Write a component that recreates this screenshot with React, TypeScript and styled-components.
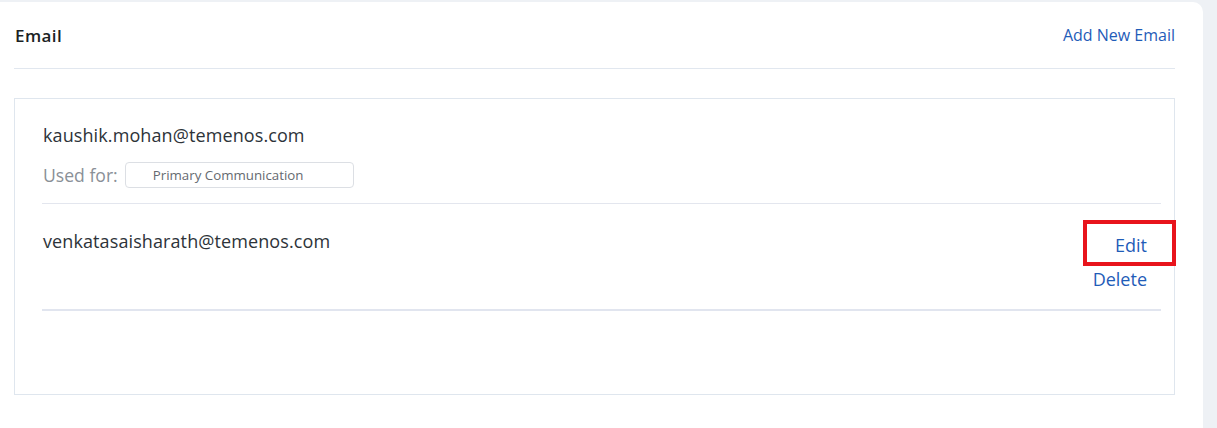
import React from "react";
import styled, { createGlobalStyle } from "styled-components";

const Global = createGlobalStyle`
  html, body { margin: 0; padding: 0; background: #eef1f5; }
  body { font-family: "Open Sans", Lato, sans-serif; }
  * { box-sizing: border-box; }
`;

const Card = styled.div`
  margin-top: 2px;
  width: 1203px;
  min-height: 426px;
  background: #ffffff;
  border-top-right-radius: 10px;
  padding: 0 28px 0 14px;
`;

const Header = styled.div`
  height: 67px;
  display: flex;
  align-items: center;
  justify-content: space-between;
  padding: 0 0 0 1px;
  border-bottom: 1px solid #e1e7ef;
`;

const Title = styled.h2`
  margin: 0;
  font-size: 17px;
  font-weight: 600;
  color: #1b1f24;
  letter-spacing: 0.4px;
`;

const Link = styled.a`
  color: #1f5cb8;
  font-size: 16px;
  cursor: pointer;
  text-decoration: none;
`;

const Box = styled.div`
  margin-top: 29px;
  border: 1px solid #dfe6ee;
  height: 297px;
  padding: 0 13px 0 27px;
`;

const Row = styled.div<{ $last?: boolean }>`
  display: flex;
  justify-content: space-between;
  align-items: flex-start;
  border-bottom: ${(p) => (p.$last ? "2px solid #e1e5ef" : "1px solid #e3e6ee")};
`;

const Info = styled.div<{ $pad: string }>`
  display: flex;
  flex-direction: column;
  padding: ${(p) => p.$pad};
`;

const Address = styled.div`
  font-size: 18px;
  line-height: 24px;
  letter-spacing: 0.1px;
  color: #2d3339;
`;

const UsedFor = styled.div`
  margin-top: 15px;
  display: flex;
  align-items: center;
  gap: 7px;
  font-size: 17.6px;
  color: #8a9097;
`;

const Chip = styled.span`
  display: inline-flex;
  align-items: center;
  height: 26px;
  width: 229px;
  padding-left: 27px;
  border: 1px solid #dcdfe4;
  border-radius: 4px;
  font-size: 13.3px;
  color: #656a70;
`;

const Actions = styled.div`
  display: flex;
  flex-direction: column;
  align-items: flex-end;
  gap: 10px;
  padding: 29px 14px 18px 0;
`;

const ActionLink = styled.a<{ $highlight?: boolean }>`
  position: relative;
  color: #1f5cb8;
  font-size: 18px;
  line-height: 24px;
  cursor: pointer;
  ${(p) =>
    p.$highlight &&
    `
    &::after {
      content: "";
      position: absolute;
      top: -13px;
      bottom: -9px;
      left: -32px;
      right: -29px;
      border: 4px solid #e8141c;
    }
  `}
`;

export default function App() {
  return (
    <>
      <Global />
      <Card>
        <Header>
          <Title>Email</Title>
          <Link>Add New Email</Link>
        </Header>
        <Box>
          <Row>
            <Info $pad="24px 0 15px 1px">
              <Address>kaushik.mohan@temenos.com</Address>
              <UsedFor>
                Used for:
                <Chip>Primary Communication</Chip>
              </UsedFor>
            </Info>
          </Row>
          <Row $last>
            <Info $pad="25px 0 0 1px">
              <Address>venkatasaisharath@temenos.com</Address>
            </Info>
            <Actions>
              <ActionLink $highlight>Edit</ActionLink>
              <ActionLink>Delete</ActionLink>
            </Actions>
          </Row>
        </Box>
      </Card>
    </>
  );
}
